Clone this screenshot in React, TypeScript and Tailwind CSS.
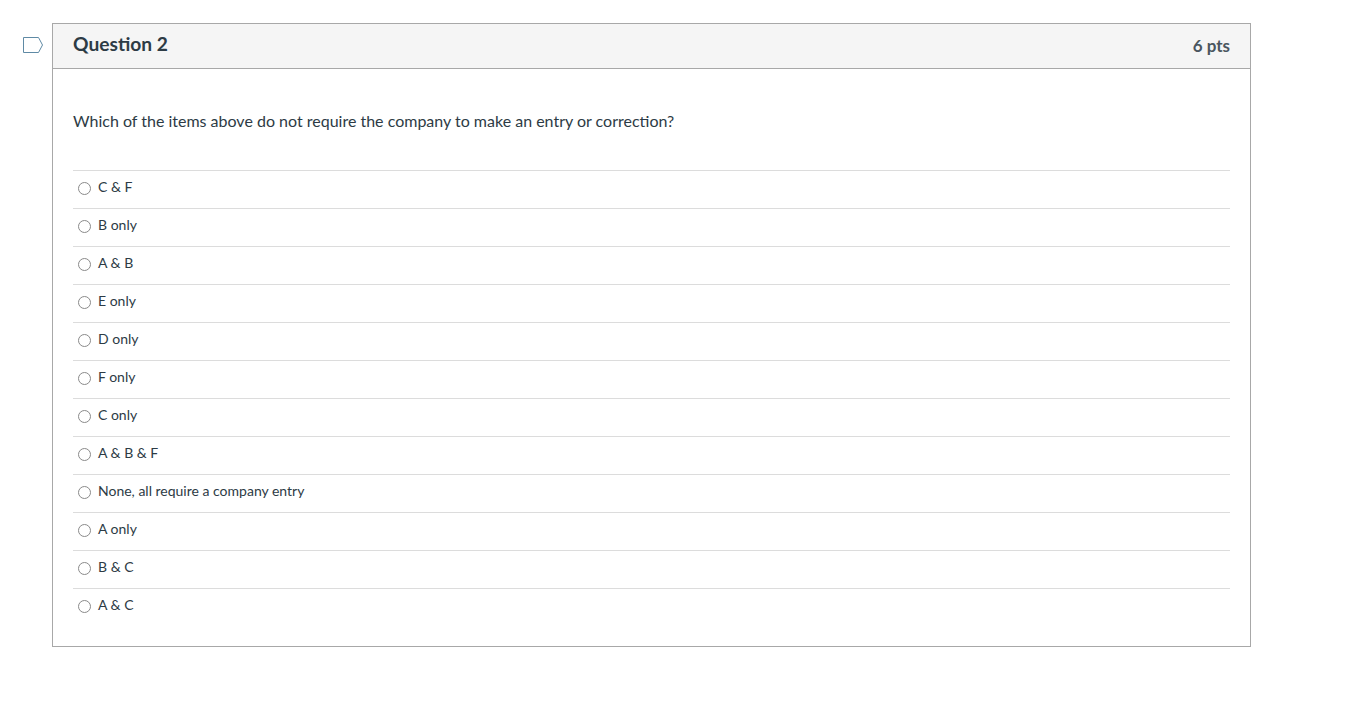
const answers = [
  "C & F",
  "B only",
  "A & B",
  "E only",
  "D only",
  "F only",
  "C only",
  "A & B & F",
  "None, all require a company entry",
  "A only",
  "B & C",
  "A & C",
];

function FlagIcon() {
  return (
    <svg width="21" height="17" viewBox="0 0 21 17" fill="none" className="block">
      <path d="M0.5 0.5H15.5L19.5 8L15.5 15.5H0.5Z" stroke="#5f8aa5" strokeWidth="1" fill="#ffffff" />
    </svg>
  );
}

export default function App() {
  return (
    <div className="min-h-[701px] bg-white pt-[23px] pl-[23px] font-['Lato',sans-serif] text-[#2d3b45]">
      <div className="flex items-start">
        <div className="mt-[14px] w-[29px] shrink-0">
          <FlagIcon />
        </div>
        <div className="h-[624px] w-[1199px] border border-[#a8a8a8]">
          <div className="flex h-[45px] items-center justify-between border-b border-[#a8a8a8] bg-[#f5f5f5] px-5">
            <h2 className="pb-[5px] text-[19.2px] font-bold leading-none">Question 2</h2>
            <span className="pb-[2px] text-[17px] font-bold leading-none text-[#4a5660]">6 pts</span>
          </div>
          <div className="px-5">
            <p className="mt-[42px] text-[16px] leading-[20px]">
              Which of the items above do not require the company to make an entry or correction?
            </p>
            <ul className="mt-[39px]">
              {answers.map((a) => (
                <li key={a} className="flex h-[38px] items-center border-t border-[#dcdcdc] pb-[6px] pl-[5px] text-[14px]">
                  <span className="mr-[7px] h-[13px] w-[13px] shrink-0 translate-y-[2px] rounded-full border border-[#8a8a8a] bg-white" />
                  <span>{a}</span>
                </li>
              ))}
            </ul>
          </div>
        </div>
      </div>
    </div>
  );
}
